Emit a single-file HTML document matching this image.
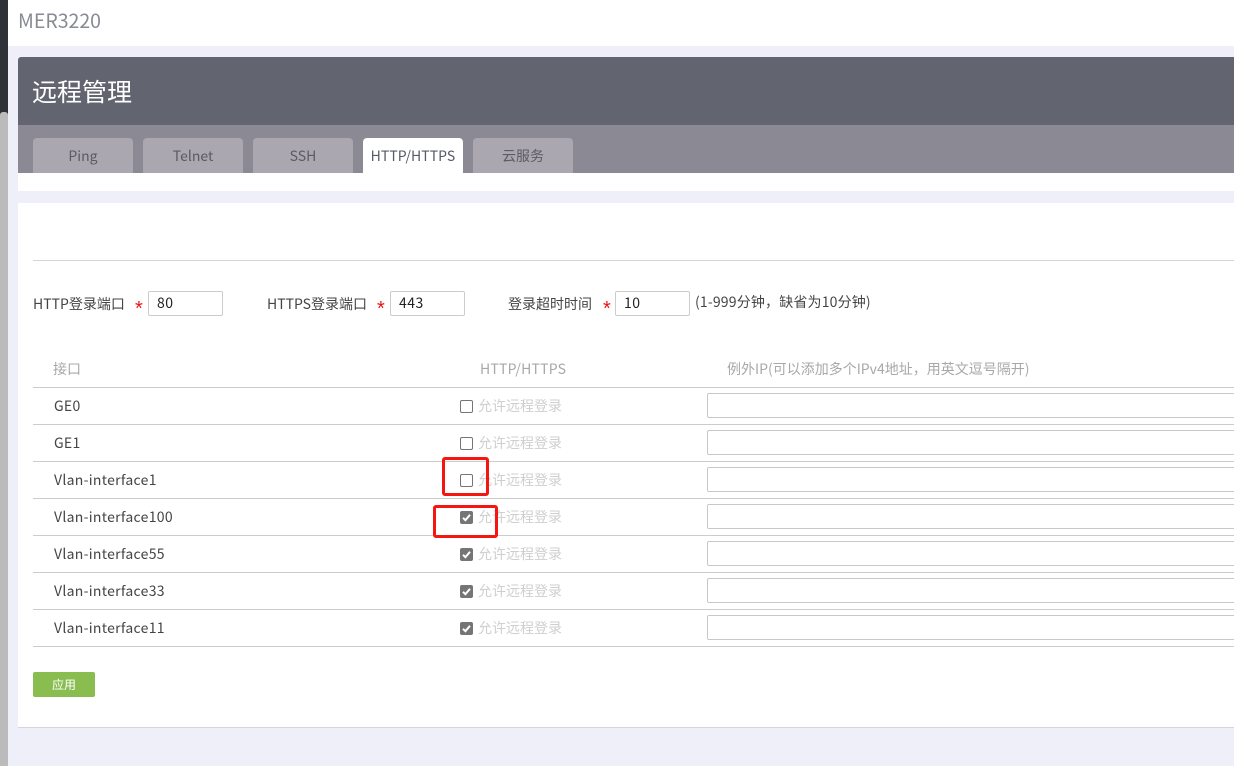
<!DOCTYPE html>
<html lang="zh">
<head>
<meta charset="utf-8">
<style>
html,body{margin:0;padding:0;}
body{width:1234px;height:766px;overflow:hidden;position:relative;background:#eeeff8;font-family:"Noto Sans CJK SC","Liberation Sans",sans-serif;font-size:14px;color:#444;}
.a{position:absolute;}
.t{position:absolute;white-space:nowrap;line-height:20px;}
.tab{position:absolute;top:138px;width:100px;height:35px;background:#aaa7b1;border-radius:4px 4px 0 0;text-align:center;line-height:36px;color:#5d5a60;font-size:14px;}
.tab.on{background:#fff;color:#565a66;letter-spacing:.05px;}
.hl{position:absolute;left:33px;width:1201px;height:1px;background:#cccccc;}
.inp{position:absolute;box-sizing:border-box;height:25px;width:75px;top:291px;border:1px solid #ccc;border-radius:2px;background:#fff;color:#222;padding-left:8px;line-height:23px;font-size:14px;letter-spacing:.5px;}
.star{position:absolute;color:#f01010;font-size:20px;font-family:"Liberation Sans",sans-serif;line-height:20px;top:299px;}
.cb{position:absolute;left:460px;width:13px;height:13px;box-sizing:border-box;border:1px solid #757575;border-radius:2px;background:#fff;}
.cb.c{background:#757575;}
.cb svg{position:absolute;left:-1px;top:-1px;}
.lab{position:absolute;left:478px;color:#cfcfcf;line-height:20px;white-space:nowrap;}
.if{position:absolute;left:54px;color:#444;line-height:20px;white-space:nowrap;letter-spacing:.29px;}
.box{position:absolute;left:707px;width:540px;height:25px;box-sizing:border-box;border:1px solid #c8c8c8;border-radius:2px;background:#fff;}
.red{position:absolute;box-sizing:border-box;border:3px solid #f5170f;border-radius:3px;}
</style>
</head>
<body>
<div class="a" style="left:0;top:0;width:8px;height:766px;background:#2f3139;"></div>
<div class="a" style="left:0;top:112px;width:8px;height:654px;background:#bbbbbb;border-radius:3px 3px 0 0;"></div>
<div class="a" style="left:8px;top:0;width:1226px;height:46px;background:#fff;"></div>
<div class="t" style="left:18px;top:8px;font-size:19.5px;line-height:24px;color:#888b94;">MER3220</div>

<div class="a" style="left:18px;top:57px;width:1216px;height:68px;background:#62646f;border-radius:3px 0 0 0;"></div>
<div class="t" style="left:32px;top:74px;font-size:25px;line-height:34px;color:#fff;">远程管理</div>
<div class="a" style="left:18px;top:125px;width:1216px;height:48px;background:#8b8993;"></div>
<div class="a" style="left:18px;top:173px;width:1216px;height:18px;background:#fff;"></div>
<div class="tab" style="left:33px;">Ping</div>
<div class="tab" style="left:143px;">Telnet</div>
<div class="tab" style="left:253px;">SSH</div>
<div class="tab on" style="left:363px;">HTTP/HTTPS</div>
<div class="tab" style="left:473px;">云服务</div>

<div class="a" style="left:18px;top:203px;width:1216px;height:524px;background:#fff;border-bottom:1px solid #d6d6d6;"></div>
<div class="hl" style="top:260px;background:#d4d4d4;"></div>

<div class="t" style="left:33px;top:294px;">HTTP登录端口</div>
<div class="star" style="left:135px;">*</div>
<div class="inp" style="left:148px;">80</div>
<div class="t" style="left:267px;top:294px;">HTTPS登录端口</div>
<div class="star" style="left:377px;">*</div>
<div class="inp" style="left:390px;">443</div>
<div class="t" style="left:508px;top:294px;">登录超时时间</div>
<div class="star" style="left:603px;">*</div>
<div class="inp" style="left:615px;">10</div>
<div class="t" style="left:695px;top:292px;letter-spacing:.17px;">(1-999分钟，缺省为10分钟)</div>

<div class="t" style="left:53px;top:359px;color:#a8a8a8;">接口</div>
<div class="t" style="left:480px;top:359px;color:#a8a8a8;letter-spacing:.2px;">HTTP/HTTPS</div>
<div class="t" style="left:727px;top:359px;color:#a8a8a8;">例外IP(可以添加多个IPv4地址，用英文逗号隔开)</div>

<div class="hl" style="top:387px;"></div>
<div class="hl" style="top:424px;"></div>
<div class="hl" style="top:461px;"></div>
<div class="hl" style="top:498px;"></div>
<div class="hl" style="top:535px;"></div>
<div class="hl" style="top:572px;"></div>
<div class="hl" style="top:609px;"></div>
<div class="hl" style="top:646px;"></div>

<div class="if" style="top:396px;">GE0</div>
<div class="cb" style="top:400px;"></div>
<div class="lab" style="top:396px;">允许远程登录</div>
<div class="box" style="top:393px;"></div>

<div class="if" style="top:433px;">GE1</div>
<div class="cb" style="top:437px;"></div>
<div class="lab" style="top:433px;">允许远程登录</div>
<div class="box" style="top:430px;"></div>

<div class="if" style="top:470px;">Vlan-interface1</div>
<div class="cb" style="top:474px;"></div>
<div class="lab" style="top:470px;">允许远程登录</div>
<div class="box" style="top:467px;"></div>

<div class="if" style="top:507px;">Vlan-interface100</div>
<div class="cb c" style="top:511px;"><svg width="13" height="13" viewBox="0 0 13 13"><path d="M3 6.8 L5.4 9.2 L10 3.8" fill="none" stroke="#fff" stroke-width="2"/></svg></div>
<div class="lab" style="top:507px;">允许远程登录</div>
<div class="box" style="top:504px;"></div>

<div class="if" style="top:544px;">Vlan-interface55</div>
<div class="cb c" style="top:548px;"><svg width="13" height="13" viewBox="0 0 13 13"><path d="M3 6.8 L5.4 9.2 L10 3.8" fill="none" stroke="#fff" stroke-width="2"/></svg></div>
<div class="lab" style="top:544px;">允许远程登录</div>
<div class="box" style="top:541px;"></div>

<div class="if" style="top:581px;">Vlan-interface33</div>
<div class="cb c" style="top:585px;"><svg width="13" height="13" viewBox="0 0 13 13"><path d="M3 6.8 L5.4 9.2 L10 3.8" fill="none" stroke="#fff" stroke-width="2"/></svg></div>
<div class="lab" style="top:581px;">允许远程登录</div>
<div class="box" style="top:578px;"></div>

<div class="if" style="top:618px;">Vlan-interface11</div>
<div class="cb c" style="top:622px;"><svg width="13" height="13" viewBox="0 0 13 13"><path d="M3 6.8 L5.4 9.2 L10 3.8" fill="none" stroke="#fff" stroke-width="2"/></svg></div>
<div class="lab" style="top:618px;">允许远程登录</div>
<div class="box" style="top:615px;"></div>

<div class="a" style="left:33px;top:672px;width:62px;height:25px;background:#8abd4f;border-radius:2px;color:#fff;text-align:center;line-height:26px;font-size:12px;">应用</div>

<div class="red" style="left:442px;top:457px;width:47px;height:39px;"></div>
<div class="red" style="left:433px;top:505px;width:65px;height:33px;"></div>
</body>
</html>
